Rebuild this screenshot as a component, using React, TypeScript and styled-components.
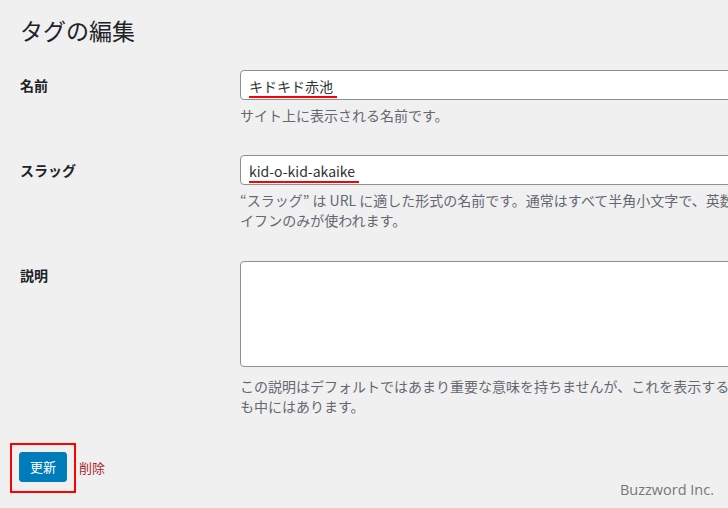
import styled, { createGlobalStyle } from "styled-components";

const GlobalStyle = createGlobalStyle`
    html, body {
        margin: 0;
        padding: 0;
        background: #f0f0f1;
        overflow: hidden;
    }
    body {
        width: 728px;
        height: 508px;
        font-family: "Noto Sans CJK JP", "Noto Sans", sans-serif;
        color: #1d2327;
    }
`;

const Page = styled.div`
    position: relative;
    width: 728px;
    height: 508px;
    padding-left: 20px;
    box-sizing: border-box;
    overflow: hidden;
`;

const Title = styled.h1`
    margin: 15px 0 10px;
    font-size: 23px;
    font-weight: 400;
    line-height: 30px;
    color: #1d2327;
`;

const FormRow = styled.div`
    display: grid;
    grid-template-columns: 220px 640px;
    padding: 15px 0;
`;

const Label = styled.label`
    padding-top: 5px;
    font-size: 14px;
    font-weight: 700;
    line-height: 20px;
`;

const Field = styled.div`
    display: flex;
    flex-direction: column;
`;

const TextBox = styled.div`
    height: 30px;
    box-sizing: border-box;
    border: 1px solid #8c8f94;
    border-radius: 4px;
    background: #fff;
    padding: 0 8px;
`;

const Value = styled.span<{ $extra: number }>`
    display: inline-block;
    margin-top: 5px;
    padding-right: ${(p) => p.$extra}px;
    font-size: 14px;
    line-height: 20px;
    color: #2c3338;
    border-bottom: 2px solid #ff0000;
`;

const TextArea = styled.textarea`
    display: block;
    height: 106px;
    margin-top: 1px;
    box-sizing: border-box;
    border: 1px solid #8c8f94;
    border-radius: 4px;
    background: #fff;
    resize: none;
    font-family: inherit;
`;

const Help = styled.p<{ $gap?: number }>`
    margin: ${(p) => p.$gap ?? 5}px 0 0;
    font-size: 14px;
    line-height: 20px;
    color: #646970;
    white-space: nowrap;
`;

const Actions = styled.div`
    display: flex;
    align-items: center;
    margin: 12px 0 0 -10px;
`;

const Highlight = styled.div`
    border: 2px solid #ff0000;
    padding: 7px 7px 9px;
`;

const PrimaryButton = styled.button`
    display: block;
    height: 30px;
    padding: 0 10px;
    border: 1px solid #007cba;
    border-radius: 3px;
    background: #007cba;
    color: #fff;
    font-family: inherit;
    font-size: 13px;
    line-height: 28px;
    cursor: pointer;
`;

const DeleteLink = styled.a`
    margin: 0 0 2px 3px;
    font-size: 13px;
    color: #a8282a;
    text-decoration: none;
`;

const Watermark = styled.div`
    position: absolute;
    right: 14px;
    bottom: 9px;
    font-family: "Open Sans", "Noto Sans", sans-serif;
    font-size: 14.5px;
    color: #777;
`;

export default function App(): JSX.Element {
    return (
        <Page>
            <GlobalStyle />
            <Title>タグの編集</Title>

            <FormRow>
                <Label>名前</Label>
                <Field>
                    <TextBox>
                        <Value $extra={4}>キドキド赤池</Value>
                    </TextBox>
                    <Help>サイト上に表示される名前です。</Help>
                </Field>
            </FormRow>

            <FormRow>
                <Label>スラッグ</Label>
                <Field>
                    <TextBox>
                        <Value $extra={4}>kid-o-kid-akaike</Value>
                    </TextBox>
                    <Help>
                        “スラッグ” は URL に適した形式の名前です。通常はすべて半角小文字で、英数字とハ
                        <br />
                        イフンのみが使われます。
                    </Help>
                </Field>
            </FormRow>

            <FormRow>
                <Label>説明</Label>
                <Field>
                    <TextArea />
                    <Help $gap={9}>
                        この説明はデフォルトではあまり重要な意味を持ちませんが、これを表示するテーマ
                        <br />
                        も中にはあります。
                    </Help>
                </Field>
            </FormRow>

            <Actions>
                <Highlight>
                    <PrimaryButton>更新</PrimaryButton>
                </Highlight>
                <DeleteLink href="#">削除</DeleteLink>
            </Actions>

            <Watermark>Buzzword Inc.</Watermark>
        </Page>
    );
}
